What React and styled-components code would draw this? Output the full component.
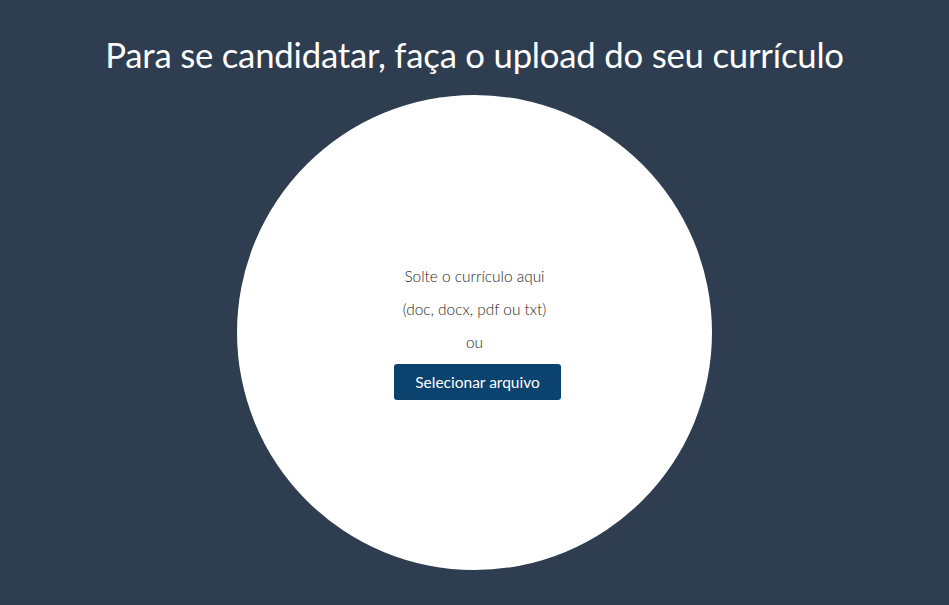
import React from "react";
import styled, { createGlobalStyle } from "styled-components";

const Global = createGlobalStyle`
  html, body { margin: 0; padding: 0; }
  body {
    background: #2e3d50;
    font-family: Lato, "Open Sans", "Liberation Sans", sans-serif;
  }
`;

const Page = styled.main`
  display: flex;
  flex-direction: column;
  align-items: center;
  min-height: 605px;
  padding-top: 34px;
  box-sizing: border-box;
`;

const Title = styled.h1`
  margin: 0 0 19px;
  font-size: 34.7px;
  font-weight: 400;
  line-height: 42px;
  color: #ffffff;
  letter-spacing: -0.2px;
`;

const Drop = styled.section`
  width: 475px;
  height: 475px;
  border-radius: 50%;
  background: #ffffff;
  display: flex;
  flex-direction: column;
  align-items: center;
  justify-content: center;
  padding-bottom: 6px;
  box-sizing: border-box;
`;

const Line = styled.p`
  margin: 0;
  font-size: 15.4px;
  font-weight: 300;
  line-height: 33px;
  color: #1f1f1f;
`;

const Button = styled.button`
  margin: 5px 0 0 6px;
  width: 167px;
  height: 36px;
  border: none;
  border-radius: 3px;
  background: #0b436e;
  color: #ffffff;
  font-family: inherit;
  font-size: 15.5px;
  font-weight: 400;
  cursor: pointer;
`;

export default function App() {
  return (
    <>
      <Global />
      <Page>
        <Title>Para se candidatar, faça o upload do seu currículo</Title>
        <Drop>
          <Line>Solte o currículo aqui</Line>
          <Line>(doc, docx, pdf ou txt)</Line>
          <Line>ou</Line>
          <Button>Selecionar arquivo</Button>
        </Drop>
      </Page>
    </>
  );
}
